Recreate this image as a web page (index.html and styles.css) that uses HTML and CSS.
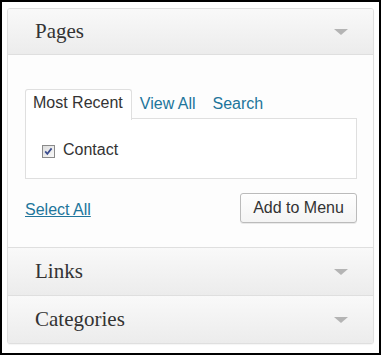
FILE: index.html
```html
<!DOCTYPE html>
<html>
<head>
<meta charset="utf-8">
<link rel="stylesheet" href="styles.css">
</head>
<body>
<div class="frame">
  <div class="panel">
    <div class="section-title open"><span>Pages</span><i class="arrow"></i></div>
    <div class="section-body">
      <ul class="tabs">
        <li class="tab active">Most Recent</li>
        <li class="tab"><a href="#">View All</a></li>
        <li class="tab"><a href="#">Search</a></li>
      </ul>
      <div class="tab-box">
        <label class="item">
          <span class="check">
            <svg width="13" height="13" viewBox="0 0 13 13">
              <defs>
                <linearGradient id="cg" x1="0" y1="0" x2="1" y2="1">
                  <stop offset="0" stop-color="#dcdcdc"/>
                  <stop offset="1" stop-color="#fafafa"/>
                </linearGradient>
              </defs>
              <rect x="0.5" y="0.5" width="12" height="12" fill="url(#cg)" stroke="#8a8a8a"/>
              <path d="M3.2 6.4 L5.3 8.8 L9.6 3.4" fill="none" stroke="#3c4d8f" stroke-width="1.7"/>
            </svg>
          </span>
          <span>Contact</span>
        </label>
      </div>
      <div class="actions">
        <a href="#" class="select-all">Select All</a>
        <button class="btn">Add to Menu</button>
      </div>
    </div>
    <div class="section-title"><span>Links</span><i class="arrow"></i></div>
    <div class="section-title last"><span>Categories</span><i class="arrow"></i></div>
  </div>
</div>
</body>
</html>
```
FILE: styles.css
```css
html, body {
  margin: 0;
  padding: 0;
  background: #fff;
}
.frame {
  width: 381px;
  height: 355px;
  box-sizing: border-box;
  border: 2px solid #000;
  padding: 6px 0 0 5px;
  background: #fff;
}
.panel {
  width: 367px;
  box-sizing: border-box;
  border: 1px solid #dfdfdf;
  border-radius: 3px;
  overflow: hidden;
  background: #fdfdfd;
  box-shadow: 0 1px 1px rgba(0,0,0,0.04);
}
.section-title {
  height: 45px;
  line-height: 45px;
  padding: 0 25px 0 27px;
  display: flex;
  justify-content: space-between;
  align-items: center;
  font-family: "Liberation Serif", serif;
  font-size: 21px;
  color: #333;
  background: linear-gradient(#f9f9f9, #ececec);
  border-bottom: 1px solid #dfdfdf;
}
.section-title + .section-title,
.section-body + .section-title {
  height: 47px;
  line-height: 47px;
}
.section-title.last {
  border-bottom: none;
}
.arrow {
  width: 0;
  height: 0;
  border-left: 7px solid transparent;
  border-right: 7px solid transparent;
  border-top: 6px solid #b4b4b4;
}
.section-body {
  padding: 34px 16px 24px 17px;
  border-bottom: 1px solid #dfdfdf;
  font-family: "Liberation Sans", Arial, sans-serif;
  font-size: 16px;
  line-height: 18px;
  color: #333;
}
.tabs {
  list-style: none;
  margin: 0;
  padding: 0;
  display: flex;
  height: 29px;
  position: relative;
  z-index: 1;
}
.tab {
  padding: 5px 8px 6px 7px;
  border: 1px solid transparent;
  border-bottom: none;
  height: 18px;
}
.tab a {
  color: #21759b;
  text-decoration: none;
}
.tab.active {
  border-color: #dfdfdf;
  border-radius: 3px 3px 0 0;
  background: #fff;
  height: 19px;
  padding-top: 4px;
  padding-bottom: 7px;
}
.tab-box {
  border: 1px solid #dfdfdf;
  background: #fff;
  padding: 22px 16px 19px 16px;
}
.item {
  display: flex;
  align-items: center;
  gap: 8px;
}
.check {
  display: flex;
  width: 13px;
  height: 13px;
  margin-top: 2px;
}
.actions {
  margin-top: 14px;
  display: flex;
  justify-content: space-between;
  align-items: center;
}
.select-all {
  color: #21759b;
  text-decoration: underline;
  margin-top: 3px;
}
.btn {
  width: 117px;
  height: 30px;
  box-sizing: border-box;
  padding: 0 12px;
  font-family: "Liberation Sans", Arial, sans-serif;
  font-size: 16px;
  color: #333;
  background: linear-gradient(#fefefe, #f4f4f4);
  border: 1px solid #bbb;
  border-radius: 3px;
  box-shadow: inset 0 1px 0 #fff, 0 1px 0 rgba(0,0,0,0.08);
}
```
